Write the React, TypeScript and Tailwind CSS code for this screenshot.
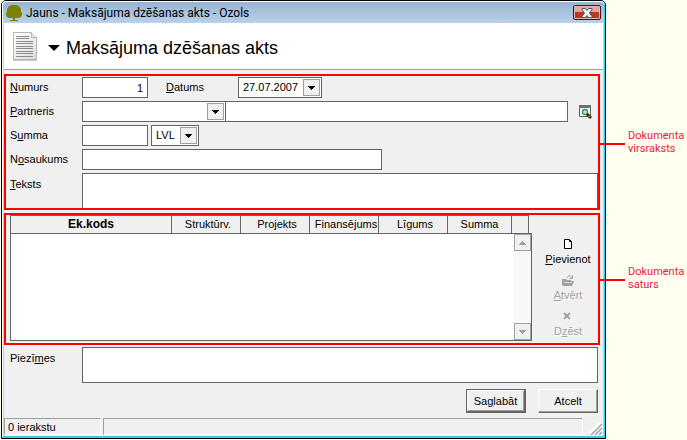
import { useState } from "react";
import type { ReactNode } from "react";

interface ComboProps {
  id: string;
  value: string;
  label?: string;
  className: string;
}

interface ToolButtonProps {
  icon: ReactNode;
  children: ReactNode;
  disabled?: boolean;
}

const FIELD = "h-[21px] min-w-0 border border-[#646464] bg-white px-1 outline-none";

const COLUMNS = [
  { name: "Ek.kods", className: "text-[12px] font-bold" },
  { name: "Struktūrv.", className: "w-[69px] pl-1 font-normal" },
  { name: "Projekts", className: "w-[69px] pl-1 font-normal" },
  { name: "Finansējums", className: "w-[69px] pl-1 font-normal" },
  { name: "Līgums", className: "w-[69px] pl-1 font-normal" },
  { name: "Summa", className: "w-[64px] font-normal" },
  { name: "", className: "w-[17px] font-normal" },
];

function TreeIcon() {
  return (
    <svg width="16" height="16" viewBox="0 0 16 16" fill="#808000" aria-hidden="true">
      <path d="M5 0h6l1 1h1l1 2 1 1v3l1 1v2l-1 2-2 1H9v2l3 1H4l3-1v-2H3l-2-1-1-2V8l1-1V4l1-1 1-2h1z" />
      <path d="M4 15h8v1H4z" />
    </svg>
  );
}

function DocumentIcon() {
  return (
    <svg width="24" height="29" viewBox="0 0 24 29" aria-hidden="true">
      <defs>
        <linearGradient id="paper" x1="0" y1="0" x2="1" y2="1">
          <stop offset="0" stopColor="#ffffff" />
          <stop offset="1" stopColor="#dcdcdc" />
        </linearGradient>
      </defs>
      <path d="M.5.5h18l5 5v22H.5z" fill="url(#paper)" stroke="#b4b4b4" />
      <path d="M18.500.5v5h5" fill="#e8e8e8" stroke="#b4b4b4" />
      <path d="M0 28.500h24" stroke="#c8c8c8" />
      <path
        d="M3 4.500h13M3 6.500h13M3 9.500h17M3 11.500h17M3 14.500h17M3 16.500h17M3 19.500h17M3 21.500h17M3 24.500h17"
        stroke="#8c8c8c"
      />
    </svg>
  );
}

function Arrow({ color = "#000", up = false }: { color?: string; up?: boolean }) {
  return (
    <svg width="7" height="4" viewBox="0 0 7 4" fill={color} shapeRendering="crispEdges" aria-hidden="true">
      <path d={up ? "M3 0h1v1h1v1h1v1h1v1H0V3h1V2h1V1h1z" : "M0 0h7v1H6v1H5v1H4v1H3V3H2V2H1V1H0z"} />
    </svg>
  );
}

function Combo({ id, value, label, className }: ComboProps) {
  return (
    <div className={`flex h-[21px] border border-[#646464] bg-white p-px ${className}`}>
      <select id={id} aria-label={label} defaultValue={value} className="min-w-0 flex-1 appearance-none pl-[3px] outline-none">
        <option value={value}>{value}</option>
      </select>
      <span className="pointer-events-none flex w-[17px] shrink-0 items-center justify-center border border-[#a0a0a0] bg-[#f0f0f0]">
        <Arrow />
      </span>
    </div>
  );
}

function ToolButton({ icon, children, disabled }: ToolButtonProps) {
  return (
    <button
      type="button"
      disabled={disabled}
      className="flex h-9 flex-col items-center justify-end leading-[14px] disabled:text-[#a0a0a0] disabled:[text-shadow:1px_1px_0_#fff]"
    >
      <span className="flex h-[14px] items-center">{icon}</span>
      <span className="mt-px">{children}</span>
    </button>
  );
}

function Callout({ children, className }: { children: ReactNode; className: string }) {
  return (
    <div className={`flex items-start gap-[3px] ${className}`}>
      <span className="mt-[14px] h-[2px] w-[25px] shrink-0 bg-[#ff0000]" />
      <p className="text-[11px] leading-[13px] text-[#ed1c3c]">{children}</p>
    </div>
  );
}

export default function App() {
  const [number, setNumber] = useState("1");

  return (
    <div className="flex min-h-screen items-start bg-[#fffff0] pl-px font-['Liberation_Sans',Arial,sans-serif] text-[11px] text-black">
      <main className="min-w-0 flex-1 rounded-t-[5px] border border-black bg-[#b9d1ea]">
        <div className="rounded-t-[4px] border-r border-b-2 border-l border-r-[#35cdf2] border-b-[#35cdf2] border-l-white">
          {/* title bar */}
          <div className="flex h-[22px] items-center rounded-t-[4px] border-t border-white bg-linear-to-b from-[#98b4d2] to-[#b9d1ea] pr-[3px] pl-[3px]">
            <TreeIcon />
            <span className="ml-1 flex-1 font-['Roboto','Noto_Sans',sans-serif] text-[12px] leading-4 whitespace-nowrap">
              Jauns - Maksājuma dzēšanas akts - Ozols
            </span>
            <button
              type="button"
              aria-label="Aizvērt"
              className="flex h-[15px] w-7 items-center justify-center rounded-[2px] border border-[#43121c] bg-linear-to-b from-[#e5a497] from-45% to-[#bb3a24] to-50% shadow-[inset_0_0_0_1px_#eab5aa]"
            >
              <svg width="12" height="10" viewBox="0 0 12 10" aria-hidden="true">
                <path
                  d="M1 .5h3.500L6 2.500 7.500.5H11v1L8.500 5 11 8.500v1H7.500L6 7.500l-1.500 2H1v-1L3.500 5 1 1.500z"
                  fill="#f4f4f4"
                  stroke="#535666"
                />
              </svg>
            </button>
          </div>

          <div className="mr-px ml-px bg-[#f0f0f0]">
            <header className="flex h-[47px] items-center border-b border-[#a0a0a0] bg-white pl-[9px]">
              <DocumentIcon />
              <svg className="mt-1 ml-[11px]" width="12" height="6" viewBox="0 0 12 6" aria-hidden="true">
                <path d="M0 0h12L6 6z" />
              </svg>
              <h1 className="mt-[3px] ml-[6px] text-[18px] leading-6 whitespace-nowrap">Maksājuma dzēšanas akts</h1>
            </header>

            <form className="pt-1 pr-[3px]" onSubmit={(e) => e.preventDefault()}>
              {/* document head */}
              <section className="flex flex-col gap-[3px] border-2 border-[#ff0000] pt-px pl-1">
                <div className="flex items-center">
                  <label htmlFor="numurs" className="w-[72px]">
                    <u>N</u>umurs
                  </label>
                  <input
                    id="numurs"
                    value={number}
                    onChange={(e) => setNumber(e.target.value)}
                    className={`${FIELD} w-[66px] text-right`}
                  />
                  <label htmlFor="datums" className="ml-[18px] w-[72px]">
                    <u>D</u>atums
                  </label>
                  <Combo id="datums" value="27.07.2007" className="w-[84px]" />
                </div>
                <div className="flex items-center">
                  <label htmlFor="partneris" className="w-[72px] shrink-0">
                    <u>P</u>artneris
                  </label>
                  <Combo id="partneris" value="" className="w-36 shrink-0" />
                  <input aria-label="Partnera nosaukums" className={`${FIELD} -ml-px flex-1`} />
                  <button type="button" aria-label="Meklēt" className="mr-[6px] ml-[11px]">
                    <svg width="13" height="14" viewBox="0 0 13 14" aria-hidden="true">
                      <path d="M.5.5h11v11H.5z" fill="#f4faf6" stroke="#5a6662" />
                      <path d="M0 0h12v3H0z" fill="#6c706f" />
                      <circle cx="6" cy="7" r="2.500" fill="#bff0d4" stroke="#3c8a64" strokeWidth="1.300" />
                      <path d="M8 9l4 4" stroke="#33210c" strokeWidth="2.800" />
                      <path d="M9.500 10.500l1.500 1.500" stroke="#b98a2c" strokeWidth="1.200" />
                    </svg>
                  </button>
                </div>
                <div className="flex items-center">
                  <label htmlFor="summa" className="w-[72px]">
                    S<u>u</u>mma
                  </label>
                  <input id="summa" className={`${FIELD} w-[66px]`} />
                  <Combo id="valuta" label="Valūta" value="LVL" className="ml-[3px] w-12" />
                </div>
                <div className="flex items-center">
                  <label htmlFor="nosaukums" className="w-[72px]">
                    N<u>o</u>saukums
                  </label>
                  <input id="nosaukums" className={`${FIELD} w-[300px]`} />
                </div>
                <div className="flex items-start">
                  <label htmlFor="teksts" className="mt-[3px] w-[72px] shrink-0">
                    <u>T</u>eksts
                  </label>
                  <textarea
                    id="teksts"
                    className="block h-[35px] min-w-0 flex-1 resize-none border border-b-0 border-[#646464] bg-white px-1 outline-none"
                  />
                </div>
              </section>

              {/* document lines */}
              <section className="mt-[3px] flex border-2 border-[#ff0000] pb-[2px] pl-1">
                <div className="min-w-0 flex-1">
                  <div className="pr-[3px]">
                    <table className="w-full table-fixed border-separate border-spacing-0 border-t border-l border-[#646464]">
                      <thead>
                        <tr>
                          {COLUMNS.map((column) => (
                            <th
                              key={column.name}
                              scope="col"
                              className={`h-[17px] border-r border-[#646464] p-0 leading-[17px] ${column.className}`}
                            >
                              {column.name}
                            </th>
                          ))}
                        </tr>
                      </thead>
                    </table>
                  </div>
                  <div className="flex h-[108px] border border-[#646464] bg-white">
                    <div className="flex-1" />
                    <div className="flex w-[17px] flex-col justify-between bg-[#f8f8f8]">
                      <button
                        type="button"
                        disabled
                        aria-label="Ritināt augšup"
                        className="flex h-[17px] items-center justify-center border border-[#a0a0a0] bg-[#f0f0f0]"
                      >
                        <Arrow up color="#a0a0a0" />
                      </button>
                      <button
                        type="button"
                        disabled
                        aria-label="Ritināt lejup"
                        className="flex h-[17px] items-center justify-center border border-[#a0a0a0] bg-[#f0f0f0]"
                      >
                        <Arrow color="#a0a0a0" />
                      </button>
                    </div>
                  </div>
                </div>
                <div className="flex w-[66px] flex-col items-center pt-[15px] pl-[6px]">
                  <ToolButton
                    icon={
                      <svg width="8" height="10" viewBox="0 0 8 10" aria-hidden="true">
                        <path d="M.5.5h5l2 2v7h-7z" fill="#fff" stroke="#000" />
                        <path d="M5.500 1v1.500H7" fill="none" stroke="#000" />
                      </svg>
                    }
                  >
                    <u>P</u>ievienot
                  </ToolButton>
                  <ToolButton
                    disabled
                    icon={
                      <svg width="12" height="11" viewBox="0 0 12 11" aria-hidden="true">
                        <path d="M0 4h4l1 1h4v1h3l-2 5H1L0 10z" fill="#a0a0a0" />
                        <path d="M5 2.500C6 .5 8 .5 10 2.500M10.500.5v3h-3" fill="none" stroke="#a0a0a0" />
                        <path d="M2 7.500h8" stroke="#d8d8d8" />
                      </svg>
                    }
                  >
                    <u>A</u>tvērt
                  </ToolButton>
                  <ToolButton
                    disabled
                    icon={
                      <svg width="9" height="9" viewBox="0 0 9 9" fill="none" aria-hidden="true">
                        <path d="M2 2l6 6M8 2L2 8" stroke="#fff" strokeWidth="2" />
                        <path d="M1 1l6 6M7 1L1 7" stroke="#a0a0a0" strokeWidth="2" />
                      </svg>
                    }
                  >
                    D<u>z</u>ēst
                  </ToolButton>
                </div>
              </section>

              <div className="mt-[2px] flex items-start pr-[2px] pl-[6px]">
                <label htmlFor="piezimes" className="mt-[3px] w-[72px] shrink-0">
                  Piezī<u>m</u>es
                </label>
                <textarea
                  id="piezimes"
                  className="block h-9 min-w-0 flex-1 resize-none border border-[#646464] bg-white px-1 outline-none"
                />
              </div>

              <div className="mt-[6px] flex justify-end gap-3 pr-[2px]">
                <button
                  type="submit"
                  className="h-6 w-[60px] border border-r-2 border-b-2 border-[#646464] bg-[#f0f0f0] pt-px shadow-[inset_1px_1px_0_#fff,inset_-1px_-1px_0_#a0a0a0]"
                >
                  Sa<u>g</u>labāt
                </button>
                <button
                  type="button"
                  className="h-6 w-[60px] border border-t-white border-r-[#646464] border-b-[#646464] border-l-white bg-[#f0f0f0] shadow-[inset_-1px_-1px_0_#a0a0a0]"
                >
                  Atcelt
                </button>
              </div>
            </form>

            <footer className="mt-[5px] flex h-[18px] items-start gap-[2px]">
              <span className="h-[17px] w-[97px] border border-t-[#a0a0a0] border-r-white border-b-white border-l-[#a0a0a0] pl-[3px] leading-[16px]">
                0 ierakstu
              </span>
              <span className="h-[17px] flex-1 border border-t-[#a0a0a0] border-r-white border-b-white border-l-[#a0a0a0]" />
              <svg className="mt-[5px] mr-px ml-[5px]" width="12" height="12" viewBox="0 0 12 12" aria-hidden="true">
                <path d="M0 11L11 0M4 12L12 4M8 12l4-4" stroke="#fff" strokeWidth="3" />
                <path d="M1 12L12 1M5 12l7-7M9 12l3-3" stroke="#a0a0a0" strokeWidth="1.500" />
              </svg>
            </footer>
          </div>
        </div>
      </main>

      <aside className="relative z-10 -ml-[6px] w-[87px] shrink-0 font-['Roboto','Noto_Sans',sans-serif]">
        <Callout className="mt-[129px]">
          Dokumenta
          <br />
          virsraksts
        </Callout>
        <Callout className="mt-[110px]">
          Dokumenta
          <br />
          saturs
        </Callout>
      </aside>
    </div>
  );
}
